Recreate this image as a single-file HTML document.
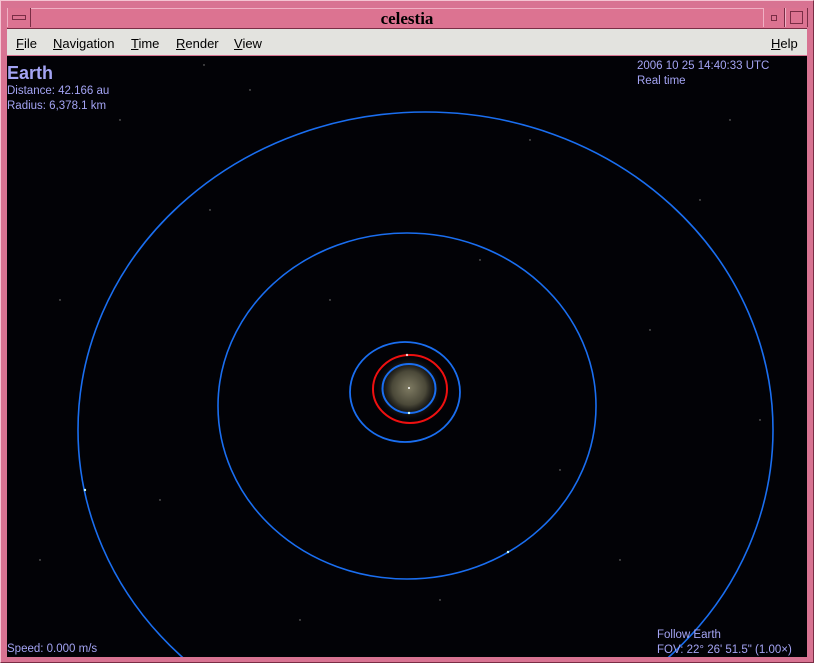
<!DOCTYPE html>
<html><head><style>
html,body{margin:0;padding:0;}
body{width:814px;height:663px;position:relative;overflow:hidden;background:#d87392;font-family:"Liberation Sans",sans-serif;}
.frame{position:absolute;left:0;top:0;width:814px;height:663px;box-sizing:border-box;border-top:1px solid #f4c4d2;border-left:1px solid #f4c4d2;border-right:1px solid #7a2d45;border-bottom:1px solid #7a2d45;}
.title{position:absolute;left:7px;top:8px;width:800px;height:19px;background:#dc7391;border-top:1px solid #f0b0c4;border-bottom:1px solid #7a2d45;}
.title span{position:absolute;left:0;right:0;top:0;text-align:center;font-family:"Liberation Serif",serif;font-weight:bold;font-size:17px;line-height:19px;color:#000;}
.btn{position:absolute;top:8px;height:19px;border-left:1px solid #f0b0c4;border-right:1px solid #7a2d45;background:#dc7391;}
.menu{position:absolute;left:7px;top:29px;width:800px;height:26px;background:#e3e3df;font-size:13px;color:#000;}
.menu span{position:absolute;top:7px;}
.menu u{text-decoration:underline;}
.sky{position:absolute;left:7px;top:56px;width:800px;height:601px;background:#020206;overflow:hidden;}
.t{position:absolute;color:#a4a4f4;font-size:11.5px;line-height:14px;white-space:nowrap;}
</style></head><body>
<div class="frame"></div>
<div class="title"><span>celestia</span></div>
<div class="btn" style="left:7px;width:22px"><div style="position:absolute;left:4px;top:7px;width:12px;height:3px;border:1px solid #7a2d45;"></div></div>
<div class="btn" style="left:763px;width:20px"><div style="position:absolute;left:7px;top:7px;width:4px;height:4px;border:1px solid #7a2d45;"></div></div>
<div class="btn" style="left:785px;width:21px"><div style="position:absolute;left:4px;top:3px;width:11px;height:11px;border:1px solid #7a2d45;"></div></div>
<div class="menu">
<span style="left:9px"><u>F</u>ile</span>
<span style="left:46px"><u>N</u>avigation</span>
<span style="left:124px"><u>T</u>ime</span>
<span style="left:169px"><u>R</u>ender</span>
<span style="left:227px"><u>V</u>iew</span>
<span style="left:764px"><u>H</u>elp</span>
</div>
<div class="sky">
<svg width="800" height="601" viewBox="7 56 800 601" style="position:absolute;left:0;top:0">
<defs><radialGradient id="g"><stop offset="0" stop-color="#7e7a62"/><stop offset="0.5" stop-color="#4a4838"/><stop offset="1" stop-color="#020206" stop-opacity="0"/></radialGradient></defs>
<g fill="#888">
<circle cx="120" cy="120" r="0.7"/><circle cx="250" cy="90" r="0.7"/><circle cx="530" cy="140" r="0.7"/><circle cx="700" cy="200" r="0.7"/><circle cx="60" cy="300" r="0.7"/><circle cx="160" cy="500" r="0.7"/><circle cx="300" cy="620" r="0.7"/><circle cx="620" cy="560" r="0.7"/><circle cx="760" cy="420" r="0.7"/><circle cx="480" cy="260" r="0.7"/><circle cx="330" cy="300" r="0.7"/><circle cx="560" cy="470" r="0.7"/><circle cx="210" cy="210" r="0.7"/><circle cx="650" cy="330" r="0.7"/><circle cx="40" cy="560" r="0.7"/><circle cx="440" cy="600" r="0.7"/><circle cx="204" cy="65" r="0.7"/><circle cx="730" cy="120" r="0.7"/>
</g>
<circle cx="409" cy="388" r="34" fill="url(#g)"/>
<ellipse cx="425.5" cy="430" rx="347.5" ry="318" fill="none" stroke="#1a6ef0" stroke-width="1.6"/>
<ellipse cx="407" cy="406" rx="189" ry="173" fill="none" stroke="#1a6ef0" stroke-width="1.6"/>
<ellipse cx="405" cy="392" rx="55" ry="50" fill="none" stroke="#1a6ef0" stroke-width="1.8"/>
<ellipse cx="410" cy="389" rx="37" ry="34" fill="none" stroke="#ee1010" stroke-width="2"/>
<ellipse cx="409" cy="388.5" rx="26.5" ry="24.5" fill="none" stroke="#1a6ef0" stroke-width="2"/>
<circle cx="409" cy="388" r="1" fill="#fff"/>
<circle cx="409" cy="413" r="1.2" fill="#cff"/>
<circle cx="407" cy="355" r="1.2" fill="#fcc"/>
<circle cx="508" cy="552" r="1.2" fill="#cff"/>
<circle cx="85" cy="490" r="1.2" fill="#cff"/>
</svg>
<div class="t" style="left:0;top:7px;font-size:18px;font-weight:bold;line-height:20px">Earth</div>
<div class="t" style="left:0;top:28px">Distance: 42.166 au</div>
<div class="t" style="left:0;top:43px">Radius: 6,378.1 km</div>
<div class="t" style="left:630px;top:3px">2006 10 25 14:40:33 UTC</div>
<div class="t" style="left:630px;top:18px">Real time</div>
<div class="t" style="left:650px;top:572px">Follow Earth</div>
<div class="t" style="left:650px;top:587px">FOV: 22° 26' 51.5" (1.00×)</div>
<div class="t" style="left:0;top:586px">Speed: 0.000 m/s</div>
</div>
</body></html>
